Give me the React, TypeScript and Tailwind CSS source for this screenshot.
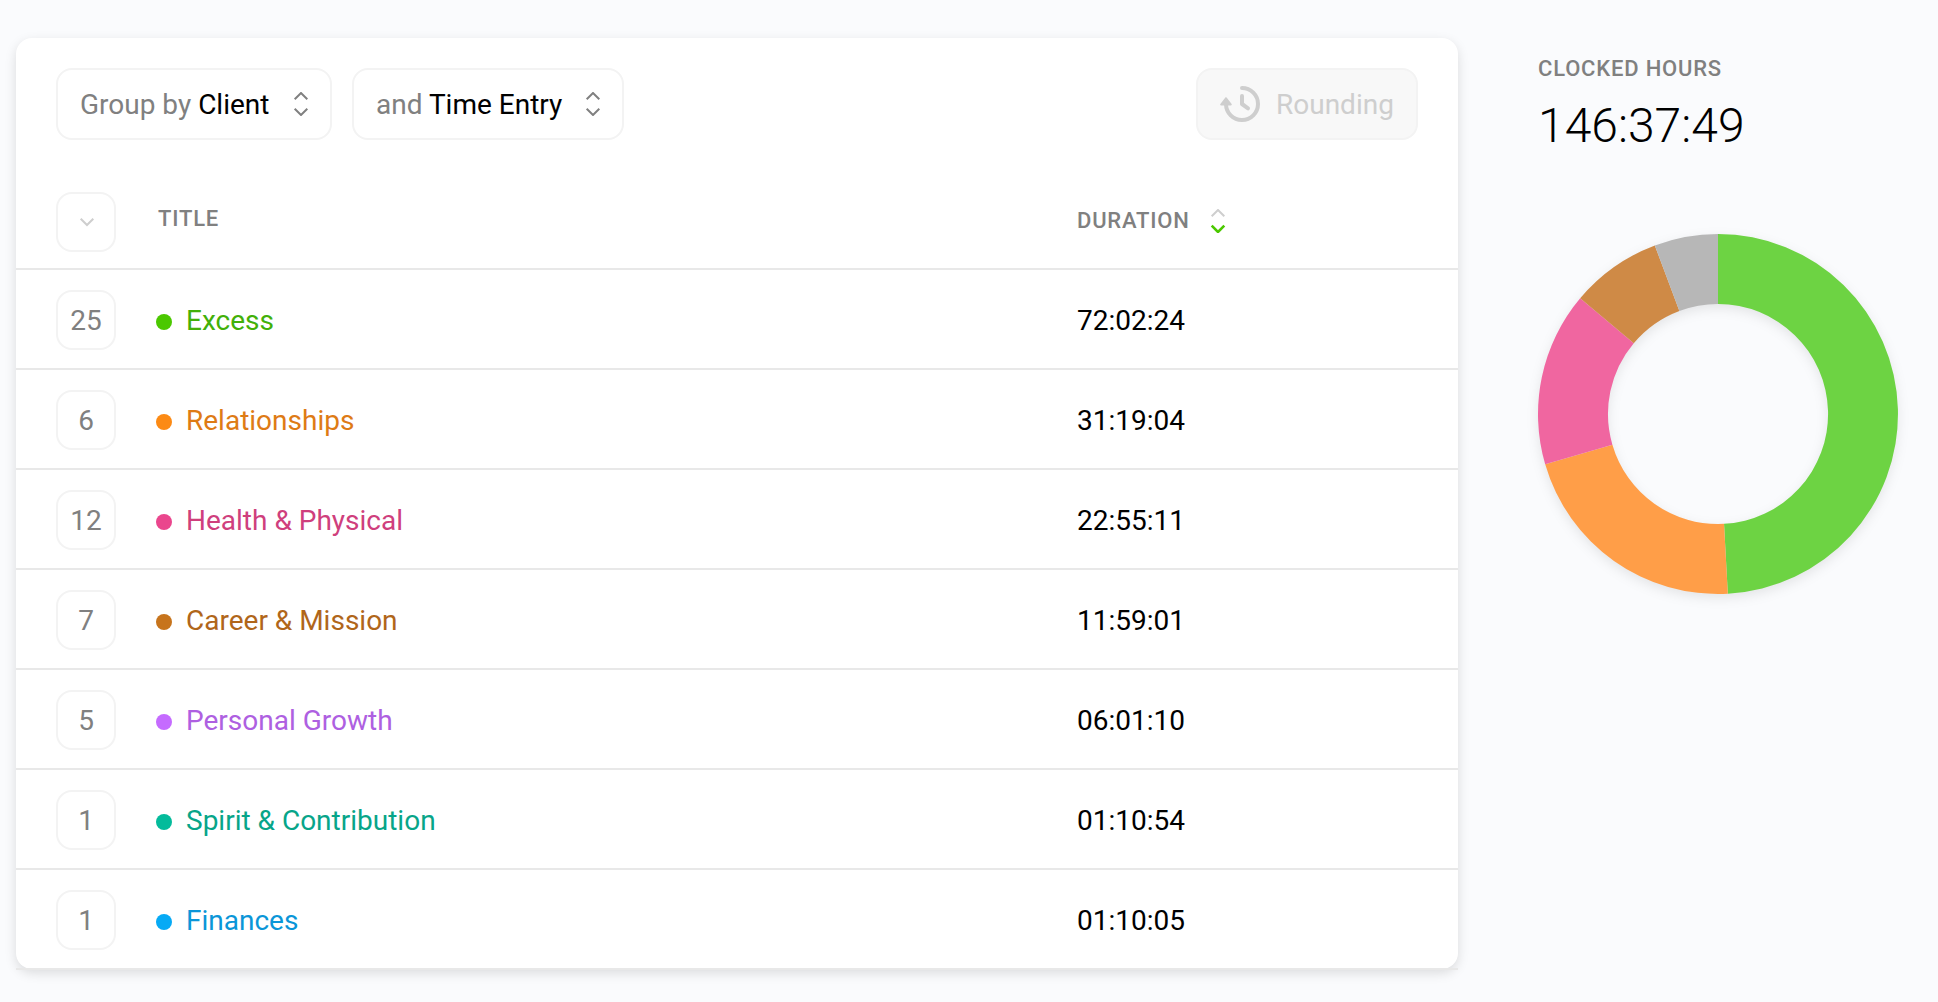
import { clsx } from "clsx";

const rows = [
  { count: 25, title: "Excess", duration: "72:02:24", dot: "bg-[#4bc800]", text: "text-[#42b008]" },
  { count: 6, title: "Relationships", duration: "31:19:04", dot: "bg-[#fc8a14]", text: "text-[#de7b15]" },
  { count: 12, title: "Health & Physical", duration: "22:55:11", dot: "bg-[#ea468d]", text: "text-[#cf3f7d]" },
  { count: 7, title: "Career & Mission", duration: "11:59:01", dot: "bg-[#c7741c]", text: "text-[#b0661a]" },
  { count: 5, title: "Personal Growth", duration: "06:01:10", dot: "bg-[#c56bff]", text: "text-[#ae60e1]" },
  { count: 1, title: "Spirit & Contribution", duration: "01:10:54", dot: "bg-[#04bb9b]", text: "text-[#07a589]" },
  { count: 1, title: "Finances", duration: "01:10:05", dot: "bg-[#06aaf5]", text: "text-[#0a96d8]" },
];

// the smallest clients are folded into the grey slice
const slices = [
  { seconds: 259344, color: "#6dd343" },
  { seconds: 112744, color: "#ff9e48" },
  { seconds: 82511, color: "#f066a0" },
  { seconds: 43141, color: "#cf8a46" },
  { seconds: 30129, color: "#b7b7b7" },
];

function point(radius: number, turn: number) {
  const a = turn * Math.PI * 2;
  return `${(180 + radius * Math.sin(a)).toFixed(2)} ${(180 - radius * Math.cos(a)).toFixed(2)}`;
}

function Donut() {
  const total = slices.reduce((sum, s) => sum + s.seconds, 0);
  let start = 0;
  return (
    <svg viewBox="0 0 360 360" className="block size-[360px] overflow-visible drop-shadow-[0_4px_6px_rgba(0,0,0,0.09)]">
      {slices.map((s) => {
        const from = start;
        const to = from + s.seconds / total;
        start = to;
        return (
          <path
            key={s.color}
            fill={s.color}
            d={`M${point(180, from)}A180 180 0 0 1 ${point(180, to)}L${point(110, to)}A110 110 0 0 0 ${point(110, from)}Z`}
          />
        );
      })}
    </svg>
  );
}

function UpDown({ up, down, bold }: { up: string; down: string; bold?: boolean }) {
  return (
    <svg viewBox="0 0 16 24" fill="none" className="h-6 w-4 shrink-0">
      <path d="M1.7 7.3 8 1l6.3 6.3" stroke={up} strokeWidth="2" />
      <path d="M1.7 16.7 8 23l6.3-6.3" stroke={down} strokeWidth={bold ? 2.6 : 2} />
    </svg>
  );
}

function GroupSelect({ label, value, className }: { label: string; value: string; className?: string }) {
  return (
    <button
      className={clsx(
        "flex h-[72px] items-center justify-between rounded-2xl border-2 border-[#f3f3f3] pr-[21px] pl-[22px]",
        className
      )}
    >
      <span className="pt-0.5 text-[#808080]">
        {label} <span className="text-black">{value}</span>
      </span>
      <UpDown up="#808080" down="#808080" />
    </button>
  );
}

export default function App() {
  return (
    <div className="flex h-[1002px] w-[1938px] items-start overflow-hidden bg-[#fafbfd] pt-[38px] pl-4 font-['Roboto',sans-serif] text-[28px] leading-8">
      <div className="h-[931px] w-[1442px] rounded-2xl bg-white shadow-[0_4px_12px_rgba(0,0,0,0.13)]">
        <div className="flex gap-5 px-10 pt-[30px]">
          <GroupSelect label="Group by" value="Client" className="w-[276px]" />
          <GroupSelect label="and" value="Time Entry" className="w-[272px]" />
          <button className="ml-auto flex h-[72px] w-[222px] items-center rounded-2xl border-2 border-[#f3f3f3] bg-[#f8f8f8] pl-[22px] text-[#cecece]">
            <svg viewBox="0 0 40 36" fill="none" stroke="currentColor" strokeWidth="4" strokeLinecap="round" strokeLinejoin="round" className="mr-4 h-9 w-10 shrink-0">
              <path d="M22 2a16 16 0 1 1-16 16" />
              <path d="M22 10v8l6 4.3" />
              <path d="M6 12 1 18.6h10z" fill="currentColor" strokeWidth="1.6" />
            </svg>
            <span className="pt-0.5">Rounding</span>
          </button>
        </div>

        <div className="mt-[52px] flex h-[78px] items-start border-b-2 border-[#e8e8e8] pl-10 text-[22px] font-medium tracking-[0.8px] text-[#808080]">
          <button className="flex size-[60px] items-center justify-center rounded-2xl border-2 border-[#f3f3f3] pl-0.5">
            <svg viewBox="0 0 16 10" fill="none" className="h-2.5 w-4">
              <path d="M1.7 1.7 8 8l6.3-6.3" stroke="#cecece" strokeWidth="2" />
            </svg>
          </button>
          <div className="mt-[11px] ml-[42px] w-[919px]">TITLE</div>
          <div className="mt-[13px] flex items-center gap-5">
            DURATION
            <UpDown up="#cecece" down="#4bc800" bold />
          </div>
        </div>

        {rows.map((row) => (
          <div key={row.title} className="flex h-[100px] items-center border-b-2 border-[#e8e8e8] pt-0.5 pl-10">
            <button className="flex size-[60px] items-center justify-center rounded-2xl border-2 border-[#f3f3f3] pt-0.5 text-[#808080]">
              {row.count}
            </button>
            <div className="ml-10 flex w-[921px] items-center">
              <span className={clsx("mt-1 mr-[14px] size-4 rounded-full", row.dot)} />
              <span className={clsx("pt-0.5", row.text)}>{row.title}</span>
            </div>
            <div className="pt-0.5 text-black">{row.duration}</div>
          </div>
        ))}
      </div>

      <div className="ml-20 w-[360px] pt-[15px]">
        <div className="text-[22px] font-medium tracking-[0.8px] text-[#808080]">CLOCKED HOURS</div>
        <div className="mt-[13px] text-5xl leading-[56px] font-light text-black">146:37:49</div>
        <div className="mt-20">
          <Donut />
        </div>
      </div>
    </div>
  );
}
